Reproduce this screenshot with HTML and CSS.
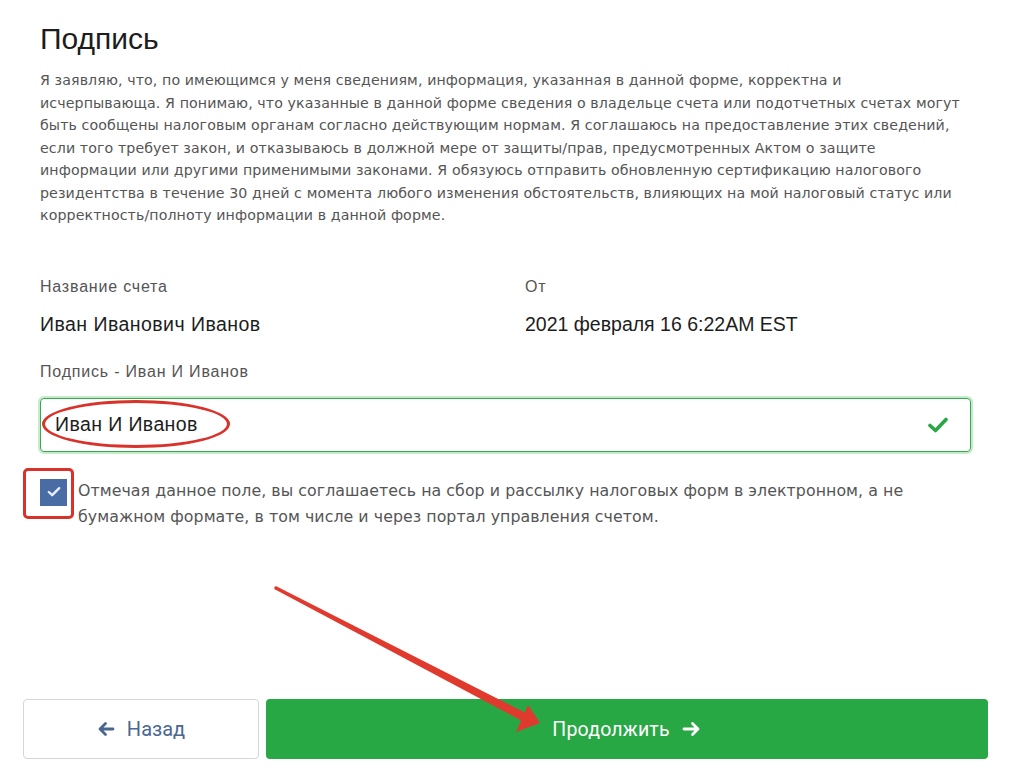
FILE: index.html
```html
<!DOCTYPE html>
<html lang="ru">
<head>
<meta charset="utf-8">
<title>Подпись</title>
<link rel="stylesheet" href="styles.css">
</head>
<body>
<div class="page">
  <h1 class="title">Подпись</h1>
  <p class="declaration">Я заявляю, что, по имеющимся у меня сведениям, информация, указанная в данной форме, корректна и<br>исчерпывающа. Я понимаю, что указанные в данной форме сведения о владельце счета или подотчетных счетах могут<br>быть сообщены налоговым органам согласно действующим нормам. Я соглашаюсь на предоставление этих сведений,<br>если того требует закон, и отказываюсь в должной мере от защиты/прав, предусмотренных Актом о защите<br>информации или другими применимыми законами. Я обязуюсь отправить обновленную сертификацию налогового<br>резидентства в течение 30 дней с момента любого изменения обстоятельств, влияющих на мой налоговый статус или<br>корректность/полноту информации в данной форме.</p>

  <div class="info">
    <div class="info-col">
      <div class="label">Название счета</div>
      <div class="value">Иван Иванович Иванов</div>
    </div>
    <div class="info-col">
      <div class="label">От</div>
      <div class="value value-date">2021 февраля 16 6:22AM EST</div>
    </div>
  </div>

  <div class="label sig-label">Подпись - Иван И Иванов</div>
  <div class="sig-input">
    <span class="sig-text">Иван И Иванов</span>
    <svg class="valid-icon" width="20" height="16" viewBox="0 0 20 16"><path d="M2 8.5 L7.5 13.5 L18 2.5" fill="none" stroke="#28a745" stroke-width="3.6" stroke-linecap="round" stroke-linejoin="round"/></svg>
    <span class="mark-ellipse"></span>
  </div>

  <div class="consent">
    <span class="checkbox">
      <svg width="14" height="12" viewBox="0 0 14 12"><path d="M1.8 6 L5.2 9.2 L12.2 2.2" fill="none" stroke="#e8eef8" stroke-width="2.4" stroke-linecap="round" stroke-linejoin="round"/></svg>
      <span class="mark-rect"></span>
    </span>
    <span class="consent-text">Отмечая данное поле, вы соглашаетесь на сбор и рассылку налоговых форм в электронном, а не бумажном формате, в том числе и через портал управления счетом.</span>
  </div>
</div>

<div class="actions">
  <button class="btn btn-back" type="button">
    <svg width="18" height="16" viewBox="0 0 18 16"><path d="M16 8 H3 M8.5 2.5 L3 8 L8.5 13.5" fill="none" stroke="#4a6792" stroke-width="2.8" stroke-linecap="round" stroke-linejoin="round"/></svg>
    <span>Назад</span>
  </button>
  <button class="btn btn-next" type="button">
    <span>Продолжить</span>
    <svg width="20" height="16" viewBox="0 0 20 16"><path d="M2 8 H16 M10.5 2.5 L16 8 L10.5 13.5" fill="none" stroke="#fff" stroke-width="2.8" stroke-linecap="round" stroke-linejoin="round"/></svg>
  </button>
</div>

<svg class="annot-arrow" width="1024" height="782" viewBox="0 0 1024 782">
  <polygon points="276.8,586.4 526.2,713.2 521.8,720.8 275.2,589.6" fill="#e03a2e"/>
  <circle cx="276" cy="588" r="1.8" fill="#e03a2e"/>
  <polygon points="540,723 516,732 528,705" fill="#e03a2e"/>
</svg>
</body>
</html>
```

FILE: styles.css
```css
html, body {
  margin: 0;
  padding: 0;
  background: #fff;
}
body {
  position: relative;
  width: 1024px;
  height: 782px;
  overflow: hidden;
  font-family: "Liberation Sans", Arial, sans-serif;
  color: #222;
}
.page {
  padding: 22px 53px 0 40px;
}
.title {
  margin: 0;
  font-size: 30px;
  font-weight: 400;
  line-height: 34px;
  color: #1d1d1d;
}
.declaration {
  margin: 13px 0 0;
  font-family: "DejaVu Sans", Verdana, sans-serif;
  font-size: 14.2px;
  line-height: 22.5px;
  color: #555;
  letter-spacing: 0.1px;
  white-space: nowrap;
}
.info {
  display: grid;
  grid-template-columns: 485px 1fr;
  margin-top: 50px;
}
.label {
  font-size: 16px;
  line-height: 20px;
  letter-spacing: 0.8px;
  color: #555;
}
.value {
  margin-top: 16px;
  font-size: 19.5px;
  line-height: 22px;
  letter-spacing: 0.45px;
  color: #1d1d1d;
}
.value-date {
  letter-spacing: 0;
}
.sig-label {
  margin-top: 27px;
}
.sig-input {
  position: relative;
  margin-top: 16px;
  height: 52px;
  border: 1px solid #3aa652;
  border-radius: 4px;
  box-shadow: 0 0 0 2px #c4ecc9;
  display: flex;
  align-items: center;
  justify-content: space-between;
  padding: 0 22px 0 14px;
}
.sig-text {
  font-size: 19.5px;
  letter-spacing: 0.4px;
  color: #1d1d1d;
}
.valid-icon {
  display: block;
}
.mark-ellipse {
  position: absolute;
  left: 1px;
  top: 1px;
  width: 188px;
  height: 48px;
  border: 3px solid #d9322a;
  border-radius: 50%;
  box-sizing: border-box;
}
.consent {
  display: flex;
  align-items: flex-start;
  gap: 11px;
  margin-top: 26px;
}
.checkbox {
  position: relative;
  flex: none;
  width: 27px;
  height: 27px;
  margin-top: 1px;
  background: #4a6ca5;
  display: flex;
  align-items: center;
  justify-content: center;
}
.mark-rect {
  position: absolute;
  left: -17px;
  top: -11px;
  width: 51px;
  height: 51px;
  border: 3.5px solid #d9322a;
  border-radius: 5px;
  box-sizing: border-box;
}
.consent-text {
  max-width: 850px;
  font-family: "DejaVu Sans", Verdana, sans-serif;
  font-size: 15.8px;
  line-height: 26px;
  letter-spacing: 0.05px;
  color: #555;
}
.actions {
  position: absolute;
  left: 23px;
  right: 36px;
  top: 699px;
  display: flex;
  gap: 7px;
}
.btn {
  height: 60px;
  border-radius: 4px;
  display: flex;
  align-items: center;
  justify-content: center;
  gap: 12px;
  font-family: Roboto, "Liberation Sans", sans-serif;
  font-size: 20px;
  cursor: pointer;
  padding: 0;
}
.btn-back {
  width: 236px;
  background: #fff;
  border: 1px solid #d6d6d6;
  color: #4a6792;
}
.btn-next {
  flex: 1;
  background: #28a745;
  border: none;
  color: #fff;
  font-size: 19.5px;
  letter-spacing: 0.2px;
}
.annot-arrow {
  position: absolute;
  left: 0;
  top: 0;
  pointer-events: none;
}
```
